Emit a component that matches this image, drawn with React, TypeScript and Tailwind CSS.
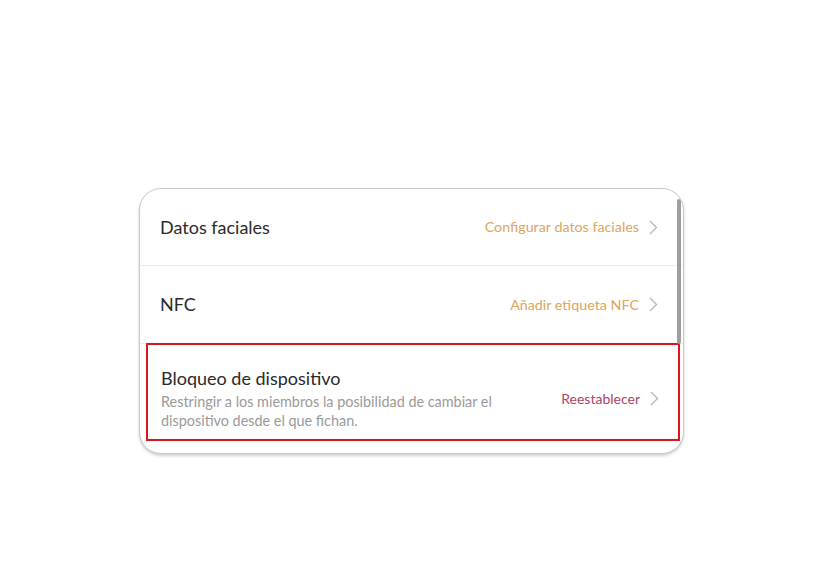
import React from "react";

function Chevron() {
  return (
    <svg width="9" height="15" viewBox="0 0 9 15" className="shrink-0 ml-[10px]">
      <path d="M1 1 L7.5 7.5 L1 14" fill="none" stroke="#b5b5b5" strokeWidth="1.3" />
    </svg>
  );
}

export default function App() {
  return (
    <div className="w-[824px] h-[587px] bg-white pt-[188px] pl-[139px]" style={{ fontFamily: "Lato, 'Open Sans', sans-serif" }}>
      <div className="relative w-[545px] h-[266px] rounded-[22px] border border-[#c9c9c9] bg-white shadow-[0_2px_3px_rgba(0,0,0,0.18)] overflow-hidden flex flex-col">
        <div className="h-[77px] flex items-center justify-between pl-[20px] pr-[25px] border-b border-[#ececec]">
          <span className="text-[18px] text-[#2a2a2a]">Datos faciales</span>
          <div className="flex items-center">
            <span className="text-[14.3px] text-[#dba65e]">Configurar datos faciales</span>
            <Chevron />
          </div>
        </div>
        <div className="h-[78px] flex items-center justify-between pl-[20px] pr-[25px] border-b border-[#ececec]">
          <span className="text-[18px] text-[#2a2a2a]">NFC</span>
          <div className="flex items-center">
            <span className="text-[14.3px] text-[#dba65e]">Añadir etiqueta NFC</span>
            <Chevron />
          </div>
        </div>
        <div className="flex-1 pl-[6px] pr-[3px] pb-[11px]">
          <div className="h-[98px] -mt-[1px] border-2 border-[#d9161e] flex items-center justify-between pl-[13px] pr-[19px] pt-[13px]">
            <div className="flex flex-col">
              <span className="text-[18px] leading-[22px] text-[#2a2a2a]">Bloqueo de dispositivo</span>
              <span className="text-[14.4px] leading-[19px] text-[#9a9a9a] w-[345px] mt-[3px]">
                Restringir a los miembros la posibilidad de cambiar el dispositivo desde el que fichan.
              </span>
            </div>
            <div className="flex items-center">
              <span className="text-[14px] text-[#a8456a]">Reestablecer</span>
              <Chevron />
            </div>
          </div>
        </div>
        <div className="absolute right-[2px] top-[10px] w-[4px] h-[145px] bg-[#9e9e9e] rounded-sm" />
      </div>
    </div>
  );
}
